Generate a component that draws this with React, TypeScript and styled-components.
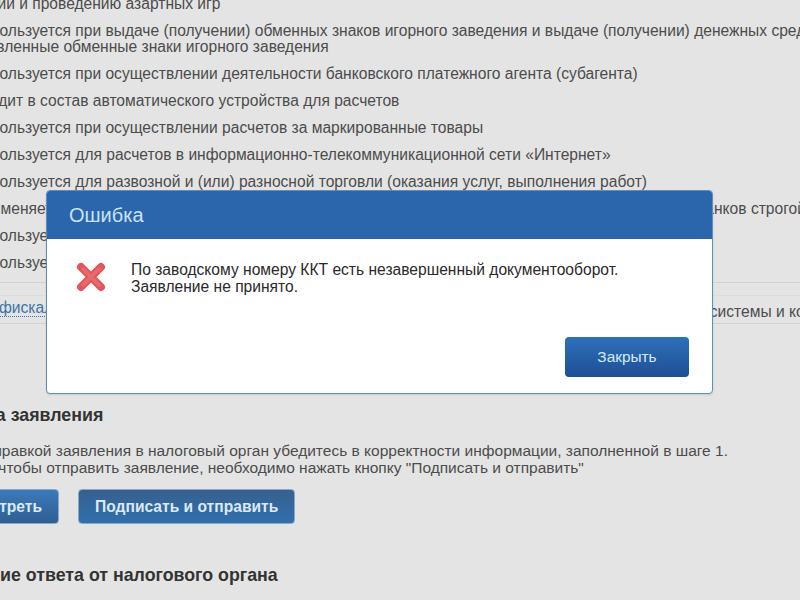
import React from "react";
import styled, { createGlobalStyle } from "styled-components";

const Global = createGlobalStyle`
  html, body { margin: 0; padding: 0; background: #e4e4e4; }
  #root { width: 800px; height: 600px; }
`;

const Page = styled.div`
  position: relative;
  width: 800px;
  height: 600px;
  overflow: hidden;
  background: #e4e4e4;
  font-family: "Liberation Sans", Arial, sans-serif;
  font-size: 15.6px;
  line-height: 17px;
  color: #4c4c4c;
`;

const Content = styled.div`
  display: flex;
  flex-direction: column;
  margin: -4px 0 0 -28px;
  width: 1200px;
`;

const OptionList = styled.div`
  display: flex;
  flex-direction: column;
  gap: 11px;
`;

const Option = styled.div<{ $shift?: number }>`
  white-space: nowrap;
  line-height: 16px;
  margin-left: ${(p) => p.$shift ?? 0}px;
`;

const Divider = styled.div`
  height: 1px;
  background: #d2d2d2;
  margin-top: 11px;
  width: 900px;
`;

const LinkRow = styled.div`
  display: flex;
  white-space: nowrap;
  margin-top: 12px;
  padding: 3px 0 3px;
  border-top: 1px solid #dcdcdc;
  border-bottom: 1px solid #d2d2d2;
  width: 900px;
`;

const FiscalLink = styled.span`
  align-self: flex-start;
  color: #3f74a8;
  border-bottom: 1px dotted #3f74a8;
  margin-left: 27px;
`;

const LinkRest = styled.span`
  margin-left: 533px;
  padding-top: 4px;
`;

const Section = styled.section<{ $top: number; $indent: number }>`
  margin-top: ${(p) => p.$top}px;
  margin-left: ${(p) => p.$indent}px;
`;

const Heading = styled.h2`
  margin: 0;
  font-size: 17.8px;
  line-height: 20px;
  font-weight: bold;
  color: #333;
  white-space: nowrap;
`;

const Paragraph = styled.p`
  margin: 17px 0 0 6px;
  font-size: 15.5px;
  white-space: nowrap;
`;

const Actions = styled.div`
  display: flex;
  gap: 19px;
  margin: 13px 0 0 1px;
`;

const PageButton = styled.div<{ $from: string; $to: string }>`
  box-sizing: border-box;
  height: 35px;
  display: flex;
  align-items: center;
  padding: 0 16px;
  border: 1px solid #8aa7c6;
  border-radius: 4px;
  background: linear-gradient(${(p) => p.$from}, ${(p) => p.$to});
  color: #dce8f3;
  font-weight: bold;
  font-size: 15.6px;
  white-space: nowrap;
`;

const Modal = styled.div`
  position: absolute;
  left: 46px;
  top: 190px;
  box-sizing: border-box;
  width: 667px;
  height: 204px;
  display: flex;
  flex-direction: column;
  background: #fff;
  border: 1px solid #5c90bd;
  border-radius: 4px;
  box-shadow: 0 1px 2px rgba(0, 0, 0, 0.12);
  overflow: hidden;
`;

const ModalHeader = styled.div`
  height: 48px;
  flex: none;
  display: flex;
  align-items: center;
  box-sizing: border-box;
  padding-left: 22px;
  background: #2b65ab;
  color: #c9e2f7;
  font-size: 20px;
`;

const ModalBody = styled.div`
  display: flex;
  flex: 1;
  padding: 22px 0 0 28px;
  gap: 24px;
  color: #2a2a2a;
  line-height: 17px;
`;

const ErrorIcon = styled.svg`
  width: 32px;
  height: 32px;
  flex: none;
  filter: blur(0.4px);
`;

const ModalFooter = styled.div`
  display: flex;
  justify-content: flex-end;
  padding: 0 23px 16px 0;
`;

const CloseButton = styled.div`
  box-sizing: border-box;
  width: 124px;
  height: 40px;
  display: flex;
  align-items: center;
  justify-content: center;
  padding-bottom: 1px;
  border-radius: 4px;
  background: linear-gradient(#2e70b8, #1d4f96);
  color: #d5e8f8;
  font-size: 15.4px;
`;

export default function App() {
  return (
    <Page>
      <Global />
      <Content>
        <OptionList>
          <Option $shift={-48}>организации и проведению азартных игр</Option>
          <Option>
            Используется при выдаче (получении) обменных знаков игорного заведения и выдаче (получении) денежных средств
            <br />
            заявленные обменные знаки игорного заведения
          </Option>
          <Option>Используется при осуществлении деятельности банковского платежного агента (субагента)</Option>
          <Option>Входит в состав автоматического устройства для расчетов</Option>
          <Option>Используется при осуществлении расчетов за маркированные товары</Option>
          <Option>Используется для расчетов в информационно-телекоммуникационной сети «Интернет»</Option>
          <Option>Используется для развозной и (или) разносной торговли (оказания услуг, выполнения работ)</Option>
          <Option>Применяется при осуществлении расчетов и с использованием автоматических устройств и (или) бланков строгой отчетности</Option>
          <Option>Используется при оказании услуг</Option>
          <Option>Используется при продаже подакцизных товаров</Option>
        </OptionList>
        <Divider />
        <LinkRow>
          <FiscalLink>фискальный накопитель</FiscalLink>
          <LinkRest>системы и контроля</LinkRest>
        </LinkRow>
        <Section $top={81} $indent={-50}>
          <Heading>Отправка заявления</Heading>
          <Paragraph>
            Перед отправкой заявления в налоговый орган убедитесь в корректности информации, заполненной в шаге 1.
            <br />
            Для того, чтобы отправить заявление, необходимо нажать кнопку "Подписать и отправить"
          </Paragraph>
          <Actions>
            <PageButton $from="#3b7ab8" $to="#2f5e94">Просмотреть</PageButton>
            <PageButton $from="#375f8f" $to="#3070ad">Подписать и отправить</PageButton>
          </Actions>
        </Section>
        <Section $top={41} $indent={-47}>
          <Heading>Получение ответа от налогового органа</Heading>
        </Section>
      </Content>
      <Modal>
        <ModalHeader>Ошибка</ModalHeader>
        <ModalBody>
          <ErrorIcon viewBox="0 0 32 32">
            <path d="M6 6 L26 26 M26 6 L6 26" stroke="#e0585b" strokeWidth="8" strokeLinecap="round" fill="none" />
            <path d="M8 8 L24 24 M24 8 L8 24" stroke="#e96a6d" strokeWidth="3.5" strokeLinecap="round" fill="none" />
          </ErrorIcon>
          <div>
            По заводскому номеру ККТ есть незавершенный документооборот.
            <br />
            Заявление не принято.
          </div>
        </ModalBody>
        <ModalFooter>
          <CloseButton>Закрыть</CloseButton>
        </ModalFooter>
      </Modal>
    </Page>
  );
}
